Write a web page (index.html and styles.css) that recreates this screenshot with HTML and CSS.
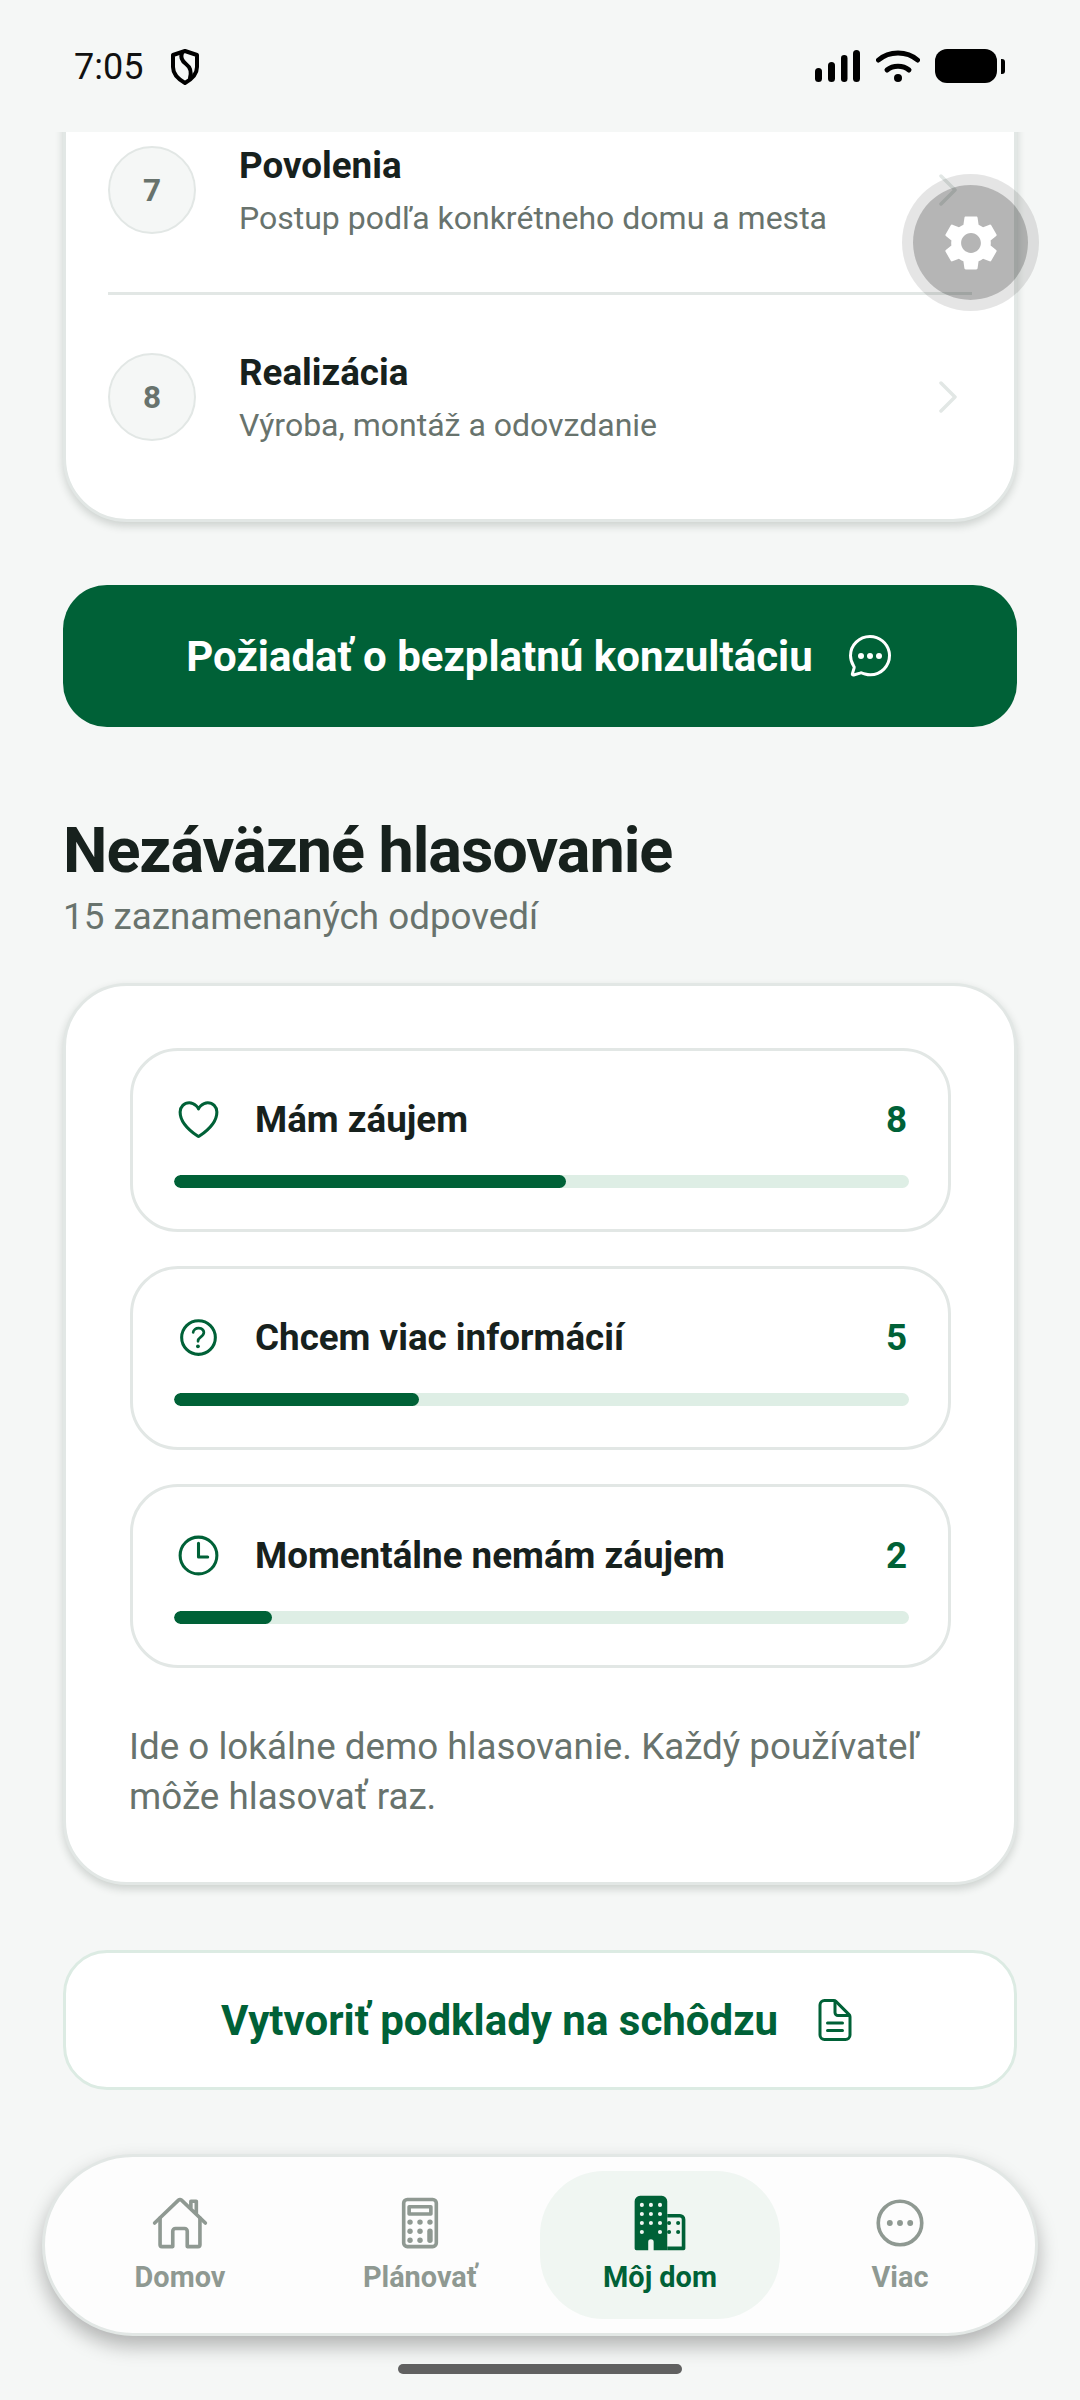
FILE: index.html
```html
<!DOCTYPE html>
<html lang="sk">

<head>
    <meta charset="UTF-8">
    <meta name="viewport" content="width=device-width, initial-scale=1.0">
    <title>Môj dom</title>
    <link rel="stylesheet" href="styles.css">
</head>

<body>
    <header class="status-bar">
        <div class="status-left">
            <span class="status-time">7:05</span>
            <svg class="status-shield" viewBox="0 0 30 36" fill="none" stroke="#000" stroke-width="4" stroke-linejoin="round" stroke-linecap="round">
                <path d="M15 2l12 4v12c0 7-5 12-12 16C8 30 3 25 3 18V6z" />
                <path d="M12 4c-2 5 0 8 4 11 4 3 6 7 4 14" />
            </svg>
        </div>
        <div class="status-right">
            <svg class="status-signal" viewBox="0 0 45 32" fill="#000">
                <rect x="0" y="18" width="7" height="14" rx="3.5" />
                <rect x="13" y="12" width="7" height="20" rx="3.5" />
                <rect x="26" y="5" width="6.5" height="27" rx="3.2" />
                <rect x="38" y="0" width="7" height="32" rx="3.5" />
            </svg>
            <svg class="status-wifi" viewBox="0 0 44 32" fill="none" stroke="#000" stroke-width="5" stroke-linecap="round">
                <path d="M2.5 10C13 0.5 31 0.5 41.500 10" />
                <path d="M11 20c6-5 16-5 22 0" />
                <circle cx="22" cy="28" r="4" fill="#000" stroke="none" />
            </svg>
            <div class="status-battery"></div>
            <div class="status-battery-nub"></div>
        </div>
    </header>

    <main class="content">
        <section class="card steps-card">
            <a class="step-row">
                <span class="step-num">7</span>
                <span class="step-text">
                    <span class="step-title">Povolenia</span>
                    <span class="step-sub">Postup podľa konkrétneho domu a mesta</span>
                </span>
                <svg class="chevron" viewBox="0 0 18 32" fill="none"><path d="M2 2l14 14L2 30" /></svg>
            </a>
            <a class="step-row">
                <span class="step-num">8</span>
                <span class="step-text">
                    <span class="step-title">Realizácia</span>
                    <span class="step-sub">Výroba, montáž a odovzdanie</span>
                </span>
                <svg class="chevron" viewBox="0 0 18 32" fill="none"><path d="M2 2l14 14L2 30" /></svg>
            </a>
        </section>

        <button class="btn btn-primary">
            <span>Požiadať o bezplatnú konzultáciu</span>
            <svg class="btn-icon" viewBox="0 0 512 512">
                <path d="M87.48 380c1.2-4.38-1.43-10.47-3.94-14.86A42.63 42.63 0 0081 361.34a199.81 199.81 0 01-33-110C47.64 139.09 140.72 48 255.82 48 356.2 48 440 117.54 459.57 209.85a199 199 0 014.43 41.64c0 112.41-89.49 204.93-204.59 204.93-18.31 0-43-4.6-56.47-8.37s-26.92-8.77-30.39-10.11a31.14 31.14 0 00-11.13-2.07 30.7 30.7 0 00-12.08 2.43L81.5 458.08a16 16 0 01-4.72 1.22 9.57 9.57 0 01-9.57-9.74 15.85 15.85 0 01.6-3.29z" fill="none" stroke="#fff" stroke-width="32" stroke-linecap="round" />
                <circle cx="160" cy="256" r="32" fill="#fff" />
                <circle cx="256" cy="256" r="32" fill="#fff" />
                <circle cx="352" cy="256" r="32" fill="#fff" />
            </svg>
        </button>

        <div class="vote-head">
            <h2>Nezáväzné hlasovanie</h2>
            <p>15 zaznamenaných odpovedí</p>
        </div>

        <section class="card vote-card">
            <div class="vote-option">
                <div class="vote-top">
                    <svg class="vote-icon" viewBox="0 0 512 512">
                        <path d="M352.92 80C288 80 256 144 256 144s-32-64-96.920-64c-52.760 0-94.540 44.140-95.080 96.810-1.100 109.330 86.730 187.080 183 252.420a16 16 0 0018 0c96.260-65.340 184.090-143.090 183-252.420-.54-52.670-42.320-96.810-95.080-96.810z" />
                    </svg>
                    <span class="vote-label">Mám záujem</span>
                    <span class="vote-count">8</span>
                </div>
                <div class="vote-track"><div class="vote-fill" style="width: 53.33%"></div></div>
            </div>
            <div class="vote-option">
                <div class="vote-top">
                    <svg class="vote-icon" viewBox="0 0 512 512">
                        <path d="M256 80a176 176 0 10176 176A176 176 0 00256 80z" />
                        <path d="M200 202.290s.84-17.500 19.570-32.570C230.680 160.770 244 158.180 256 158c10.930-.14 20.690 1.670 26.530 4.450 10 4.760 29.470 16.380 29.470 41.090 0 26-17 37.810-36.370 50.800S251 281.430 251 296" stroke-width="28" />
                        <circle cx="250" cy="348" r="20" class="dot" />
                    </svg>
                    <span class="vote-label">Chcem viac informácií</span>
                    <span class="vote-count">5</span>
                </div>
                <div class="vote-track"><div class="vote-fill" style="width: 33.33%"></div></div>
            </div>
            <div class="vote-option">
                <div class="vote-top">
                    <svg class="vote-icon" viewBox="0 0 512 512">
                        <path d="M256 64C150 64 64 150 64 256s86 192 192 192 192-86 192-192S362 64 256 64z" />
                        <path d="M256 128v144h96" />
                    </svg>
                    <span class="vote-label">Momentálne nemám záujem</span>
                    <span class="vote-count">2</span>
                </div>
                <div class="vote-track"><div class="vote-fill" style="width: 13.33%"></div></div>
            </div>
            <p class="vote-note">Ide o lokálne demo hlasovanie. Každý používateľ môže hlasovať raz.</p>
        </section>

        <button class="btn btn-outline">
            <span>Vytvoriť podklady na schôdzu</span>
            <svg class="btn-icon" viewBox="0 0 512 512" fill="none" stroke="#006137" stroke-width="32" stroke-linecap="round" stroke-linejoin="round">
                <path d="M416 221.250V416a48 48 0 01-48 48H144a48 48 0 01-48-48V96a48 48 0 0148-48h98.750a32 32 0 0122.620 9.370l141.260 141.260a32 32 0 019.370 22.620z" />
                <path d="M256 56v120a32 32 0 0032 32h120M176 288h160M176 368h160" />
            </svg>
        </button>
    </main>

    <nav class="tab-bar">
        <a class="tab">
            <svg class="tab-icon" viewBox="0 0 512 512">
                <path d="M80 212v236a16 16 0 0016 16h96V328a24 24 0 0124-24h80a24 24 0 0124 24v136h96a16 16 0 0016-16V212" />
                <path d="M480 256L266.890 52c-5-5.280-16.690-5.340-21.780 0L32 256M400 179V64h-48v69" />
            </svg>
            <span>Domov</span>
        </a>
        <a class="tab">
            <svg class="tab-icon" viewBox="0 0 512 512">
                <rect x="112" y="48" width="288" height="416" rx="32" ry="32" />
                <rect x="160" y="112" width="192" height="64" />
                <g class="dots">
                    <circle cx="168" cy="248" r="24" /><circle cx="256" cy="248" r="24" /><circle cx="344" cy="248" r="24" />
                    <circle cx="168" cy="328" r="24" /><circle cx="256" cy="328" r="24" />
                    <circle cx="168" cy="408" r="24" /><circle cx="256" cy="408" r="24" />
                    <rect x="320" y="304" width="48" height="128" rx="24" />
                </g>
            </svg>
            <span>Plánovať</span>
        </a>
        <a class="tab tab-active">
            <svg class="tab-icon" viewBox="0 0 512 512">
                <path class="fill" d="M80 16h192a48 48 0 0148 48v432H200v-72a24 24 0 00-48 0v72H48a16 16 0 01-16-16V64a48 48 0 0148-48z" />
                <path class="fill" d="M320 176h112a48 48 0 0148 48v256a16 16 0 01-16 16H320v-32h128V224a16 16 0 00-16-16H320z" />
                <path class="holes" d="M96 96v320M176 96v240M256 96v320" />
                <path class="pegs" d="M336 256v160M416 256v160" />
            </svg>
            <span>Môj dom</span>
        </a>
        <a class="tab">
            <svg class="tab-icon" viewBox="0 0 512 512">
                <path d="M448 256c0-106-86-192-192-192S64 150 64 256s86 192 192 192 192-86 192-192z" />
                <g class="dots">
                    <circle cx="166" cy="256" r="26" /><circle cx="256" cy="256" r="26" /><circle cx="346" cy="256" r="26" />
                </g>
            </svg>
            <span>Viac</span>
        </a>
    </nav>

    <div class="home-bar"></div>

    <div class="fab">
        <svg viewBox="0 0 24 24" fill="#fff">
            <path d="M19.140 12.940c.04-.3.06-.61.06-.94 0-.32-.02-.64-.07-.94l2.030-1.580c.18-.14.23-.41.12-.61l-1.920-3.320c-.12-.22-.37-.29-.59-.22l-2.390.96c-.5-.38-1.030-.7-1.620-.94l-.36-2.540c-.04-.24-.24-.41-.48-.41h-3.840c-.24 0-.43.17-.47.41l-.36 2.540c-.59.24-1.130.57-1.620.94l-2.390-.96c-.22-.08-.47 0-.59.22L2.740 8.870c-.12.21-.08.47.12.61l2.030 1.580c-.05.3-.09.63-.09.94s.02.64.07.94l-2.030 1.580c-.18.14-.23.41-.12.61l1.920 3.320c.12.22.37.29.59.22l2.390-.96c.5.38 1.030.7 1.620.94l.36 2.540c.05.24.24.41.48.41h3.840c.24 0 .44-.17.47-.41l.36-2.540c.59-.24 1.130-.56 1.620-.94l2.390.96c.22.08.47 0 .59-.22l1.920-3.320c.12-.22.07-.47-.12-.61l-2.010-1.580zM12 15.600c-1.980 0-3.600-1.620-3.600-3.600s1.620-3.600 3.600-3.600 3.600 1.620 3.600 3.600-1.620 3.600-3.600 3.600z" />
        </svg>
    </div>
</body>

</html>
```

FILE: styles.css
```css
:root {
    --green: #006137;
    --green-soft: #deeee5;
    --bg: #f5f7f6;
    --ink: #17211d;
    --muted: #68736d;
    --line: #e2e7e5;
    --tab-grey: #8f9992;
}

* {
    box-sizing: border-box;
}

body {
    margin: 0;
    width: 1080px;
    height: 2400px;
    overflow: hidden;
    position: relative;
    background-color: var(--bg);
    color: var(--ink);
    font-family: Roboto, sans-serif;
    display: flex;
    flex-direction: column;
}

/* status bar */
.status-bar {
    height: 132px;
    flex: none;
    padding: 0 75px 0 74px;
    display: flex;
    justify-content: space-between;
    align-items: center;
}

.status-left,
.status-right {
    display: flex;
    align-items: center;
}

.status-left {
    margin-top: 2px;
}

.status-time {
    font-size: 36px;
    color: #111;
}

.status-shield {
    width: 30px;
    height: 36px;
    margin-left: 27px;
}

.status-signal {
    width: 45px;
    height: 32px;
}

.status-wifi {
    width: 44px;
    height: 32px;
    margin-left: 16px;
}

.status-battery {
    width: 62px;
    height: 34px;
    margin-left: 15px;
    background-color: #000;
    border-radius: 12px;
}

.status-battery-nub {
    width: 4px;
    height: 15px;
    margin-left: 4px;
    background-color: #000;
    border-radius: 0 3px 3px 0;
}

/* scrolled content */
.content {
    height: 2022px;
    flex: none;
    overflow: hidden;
    padding: 0 63px;
    display: flex;
    flex-direction: column;
}

.card {
    background-color: #fff;
    border: 3px solid var(--line);
    box-shadow: 0 4px 9px rgba(20, 40, 30, 0.18);
}

.steps-card {
    margin-top: -80px;
    padding: 31px 42px 17px;
    border-radius: 64px;
    flex: none;
}

.step-row {
    height: 206px;
    padding-top: 2px;
    display: flex;
    align-items: center;
}

.step-row + .step-row {
    height: 210px;
    padding: 0 0 3px;
    border-top: 3px solid var(--line);
}

.step-num {
    width: 88px;
    height: 88px;
    flex: none;
    border-radius: 50%;
    background-color: var(--bg);
    border: 2px solid var(--line);
    color: var(--muted);
    font-size: 31.5px;
    font-weight: 700;
    display: flex;
    align-items: center;
    justify-content: center;
}

.step-text {
    flex: 1;
    margin-left: 43px;
    padding-top: 4px;
    display: flex;
    flex-direction: column;
    gap: 8px;
}

.step-title {
    font-size: 36.75px;
    font-weight: 700;
    line-height: 44px;
}

.step-sub {
    font-size: 32px;
    line-height: 44px;
    color: var(--muted);
}

.chevron {
    width: 18px;
    height: 32px;
    margin-right: 15px;
    stroke: var(--line);
    stroke-width: 3.500;
    stroke-linecap: round;
    stroke-linejoin: round;
}

.btn {
    flex: none;
    width: 100%;
    font-family: inherit;
    font-size: 42px;
    font-weight: 700;
    display: flex;
    align-items: center;
    justify-content: center;
    gap: 33px;
    padding: 0;
}

.btn-icon {
    width: 48px;
    height: 48px;
    flex: none;
}

.btn-primary {
    margin-top: 63px;
    height: 142px;
    border: none;
    border-radius: 44px;
    background-color: var(--green);
    color: #fff;
}

.btn-outline {
    margin-top: 65px;
    height: 140px;
    border: 3px solid #dcebe3;
    border-radius: 44px;
    background-color: #fff;
    color: var(--green);
}

.vote-head {
    flex: none;
    margin-top: 88px;
    height: 168px;
}

.vote-head h2 {
    margin: 0;
    font-size: 63px;
    font-weight: 700;
    line-height: 72px;
    letter-spacing: -1.05px;
}

.vote-head p {
    margin: 7px 0 0;
    font-size: 36.75px;
    line-height: 46px;
    color: var(--muted);
}

.vote-card {
    flex: none;
    height: 902px;
    padding: 62px 63px 0 64px;
    border-radius: 64px;
    display: flex;
    flex-direction: column;
    gap: 34px;
}

.vote-option {
    height: 184px;
    flex: none;
    padding: 0 39px 0 41px;
    border: 3px solid var(--line);
    border-radius: 48px;
}

.vote-top {
    height: 124px;
    padding-top: 12px;
    display: flex;
    align-items: center;
}

.vote-icon {
    width: 49px;
    height: 49px;
    flex: none;
    fill: none;
    stroke: var(--green);
    stroke-width: 32;
    stroke-linecap: round;
    stroke-linejoin: round;
}

.vote-icon .dot {
    fill: var(--green);
    stroke: none;
}

.vote-label {
    flex: 1;
    margin-left: 32px;
    font-size: 36.75px;
    font-weight: 700;
}

.vote-count {
    margin-right: 2px;
    font-size: 36.75px;
    font-weight: 700;
    color: var(--green);
}

.vote-track {
    height: 13px;
    border-radius: 7px;
    background-color: var(--green-soft);
    overflow: hidden;
}

.vote-fill {
    height: 100%;
    border-radius: 7px;
    background-color: var(--green);
}

.vote-note {
    margin: 20px 0 0 -1px;
    font-size: 36.75px;
    line-height: 50px;
    color: var(--muted);
}

/* bottom nav */
.tab-bar {
    flex: none;
    height: 182px;
    margin: 0 42px;
    padding: 14px 15px;
    background-color: #fdfdfd;
    border: 3px solid var(--line);
    border-radius: 92px;
    box-shadow: 0 10px 20px rgba(0, 0, 0, 0.28);
    display: grid;
    grid-template-columns: repeat(4, 240px);
}

.tab {
    display: flex;
    flex-direction: column;
    align-items: center;
    padding-top: 23px;
    border-radius: 64px;
    font-size: 28.9px;
    font-weight: 700;
    color: var(--tab-grey);
}

.tab span {
    margin-top: 8px;
}

.tab-icon {
    width: 58px;
    height: 58px;
    flex: none;
    fill: none;
    stroke: var(--tab-grey);
    stroke-width: 32;
    stroke-linecap: round;
    stroke-linejoin: round;
}

.tab-icon .dots {
    fill: var(--tab-grey);
    stroke: none;
}

.tab-icon .fill {
    fill: var(--green);
    stroke: none;
}

.tab-icon .holes,
.tab-icon .pegs {
    stroke-dasharray: 0 80;
    stroke-width: 36;
}

.tab-icon .holes {
    stroke: #f0f6f2;
}

.tab-icon .pegs {
    stroke: var(--green);
}

.tab-active {
    background-color: #f0f6f2;
    color: var(--green);
}

.home-bar {
    flex: none;
    width: 284px;
    height: 10px;
    margin: 28px auto 0;
    border-radius: 5px;
    background-color: #616161;
}

/* floating debug button */
.fab {
    position: absolute;
    top: 185px;
    left: 913px;
    width: 115px;
    height: 115px;
    border-radius: 50%;
    background-color: rgba(0, 0, 0, 0.29);
    box-shadow: 0 0 0 11px rgba(0, 0, 0, 0.1);
    display: flex;
    align-items: center;
    justify-content: center;
}

.fab svg {
    width: 66px;
    height: 66px;
}
```
